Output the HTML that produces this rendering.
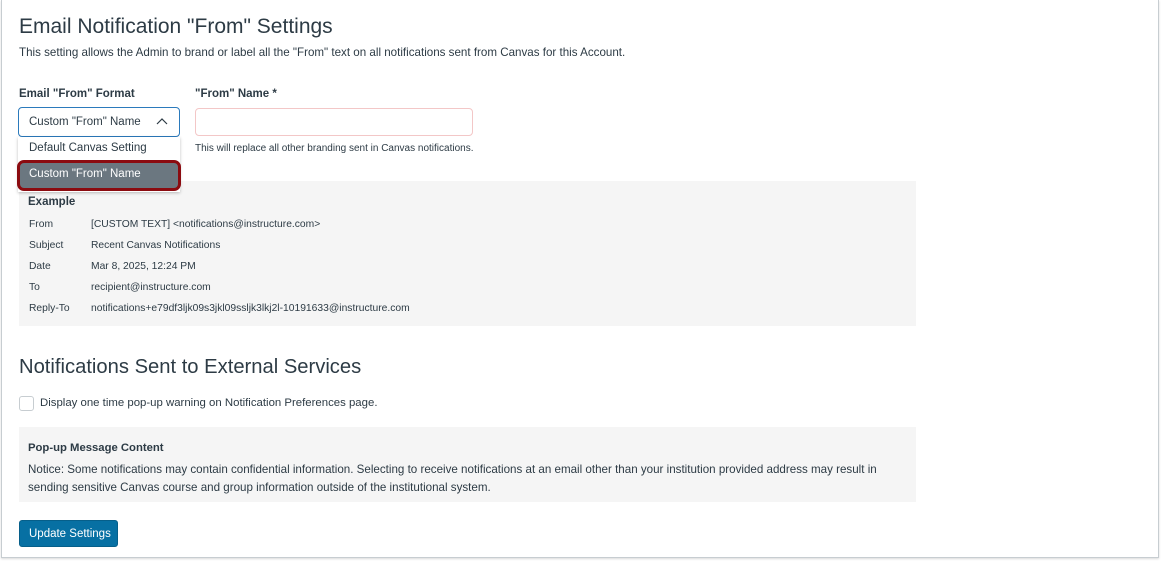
<!DOCTYPE html><html><head><style>
*{box-sizing:border-box;margin:0;padding:0}
body{width:1161px;height:561px;background:#fff;font-family:"Liberation Sans",sans-serif;color:#2d3b45;position:relative;overflow:hidden}
.frame{position:absolute;left:1px;top:0;width:1158px;height:558px;border:1px solid #c7cdd1;border-top:none;box-shadow:0 1px 2px rgba(0,0,0,.15)}
.a{position:absolute;white-space:nowrap}
h1{font-weight:normal;font-size:21px}
.box{position:absolute;background:#f5f5f5}
.s{font-size:10.3px;color:#2d3b45}
</style></head><body>
<div class="frame"></div>
<h1 class="a" style="left:19px;top:15px">Email Notification "From" Settings</h1>
<div class="a" style="left:19px;top:46px;font-size:11.6px">This setting allows the Admin to brand or label all the "From" text on all notifications sent from Canvas for this Account.</div>
<div class="a" style="left:19px;top:88px;font-size:11.5px;font-weight:bold">Email "From" Format</div>
<div class="a" style="left:195px;top:88px;font-size:11.5px;font-weight:bold">"From" Name *</div>
<div class="box" style="left:181px;top:181px;width:735px;height:145px"></div>
<div class="box" style="left:19px;top:190px;width:200px;height:136px"></div>
<div class="a" style="left:18px;top:107px;width:162px;height:30px;border:1px solid #2b7abc;border-radius:4px;background:#fff"></div>
<div class="a" style="left:29px;top:116px;font-size:11.5px">Custom "From" Name</div>
<svg class="a" style="left:156px;top:117px" width="12" height="8"><path d="M1 7 L6 2 L11 7" fill="none" stroke="#2d3b45" stroke-width="1.2"/></svg>
<div class="a" style="left:18px;top:137px;width:162px;height:55px;background:#fff;box-shadow:0 1px 3px rgba(0,0,0,.25)"></div>
<div class="a" style="left:29px;top:142px;font-size:11.5px">Default Canvas Setting</div>
<div class="a" style="left:17px;top:160px;width:164px;height:31px;border:3px solid #8b0b10;border-radius:7px;background:#6b7780"></div>
<div class="a" style="left:29px;top:168px;font-size:11.5px;color:#fff">Custom "From" Name</div>
<div class="a" style="left:195px;top:108px;width:278px;height:28px;border:1px solid #f3c7c7;border-radius:4px"></div>
<div class="a" style="left:195px;top:143px;font-size:10px">This will replace all other branding sent in Canvas notifications.</div>
<div class="a" style="left:28px;top:196px;font-size:11.5px;font-weight:bold">Example</div>
<div class="a s" style="left:29px;top:219px">From</div><div class="a s" style="left:91px;top:219px">[CUSTOM TEXT] &lt;notifications@instructure.com&gt;</div>
<div class="a s" style="left:29px;top:240px">Subject</div><div class="a s" style="left:91px;top:240px">Recent Canvas Notifications</div>
<div class="a s" style="left:29px;top:261px">Date</div><div class="a s" style="left:91px;top:261px">Mar 8, 2025, 12:24 PM</div>
<div class="a s" style="left:29px;top:282px">To</div><div class="a s" style="left:91px;top:282px">recipient@instructure.com</div>
<div class="a s" style="left:29px;top:303px">Reply-To</div><div class="a s" style="left:91px;top:303px">notifications+e79df3ljk09s3jkl09ssljk3lkj2l-10191633@instructure.com</div>
<h1 class="a" style="left:19px;top:356px;font-size:20.2px">Notifications Sent to External Services</h1>
<div class="a" style="left:19px;top:396px;width:15px;height:15px;border:1px solid #c7cdd1;border-radius:3px"></div>
<div class="a" style="left:40px;top:397px;font-size:11.4px">Display one time pop-up warning on Notification Preferences page.</div>
<div class="box" style="left:19px;top:427px;width:897px;height:75px"></div>
<div class="a" style="left:28px;top:442px;font-size:11.3px;font-weight:bold">Pop-up Message Content</div>
<div class="a" style="left:28px;top:461px;font-size:11.6px;line-height:18px">Notice: Some notifications may contain confidential information. Selecting to receive notifications at an email other than your institution provided address may result in<br>sending sensitive Canvas course and group information outside of the institutional system.</div>
<div class="a" style="left:19px;top:520px;width:99px;height:27px;background:#0770a3;border-radius:3px;border:1px solid #065f8a"></div>
<div class="a" style="left:29px;top:528px;font-size:11.5px;color:#fff">Update Settings</div>
</body></html>
